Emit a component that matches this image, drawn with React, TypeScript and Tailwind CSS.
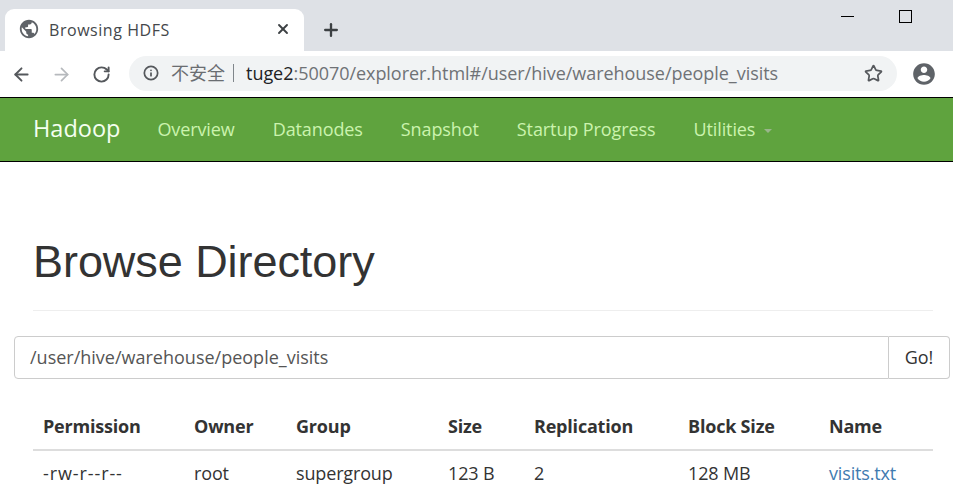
import React from 'react';
import { ArrowLeft, ArrowRight, RotateCw, X, Plus, Star, Info } from 'lucide-react';

const sans = "font-['Open_Sans','Noto_Sans_CJK_SC',sans-serif]";

const Globe = () => (
  <svg viewBox="0 0 24 24" width="22" height="22" fill="#5f6368" className="-ml-[2px]">
    <path d="M12 2C6.48 2 2 6.48 2 12s4.48 10 10 10 10-4.48 10-10S17.52 2 12 2zm-1 17.93C7.05 19.44 4 16.08 4 12c0-.62.08-1.21.21-1.79L9 15v1c0 1.1.9 2 2 2v1.93zm6.9-2.54c-.26-.81-1-1.39-1.9-1.39h-1v-3c0-.55-.45-1-1-1H8v-2h2c.55 0 1-.45 1-1V7h2c1.1 0 2-.9 2-2v-.41c2.93 1.19 5 4.06 5 7.41 0 2.08-.8 3.97-2.1 5.39z" />
  </svg>
);

const Account = () => (
  <svg viewBox="0 0 24 24" width="26" height="26" fill="#5f6368">
    <path d="M12 2C6.48 2 2 6.48 2 12s4.48 10 10 10 10-4.48 10-10S17.52 2 12 2zm0 3c1.66 0 3 1.34 3 3s-1.34 3-3 3-3-1.34-3-3 1.34-3 3-3zm0 14.2c-2.5 0-4.71-1.28-6-3.22.03-1.99 4-3.08 6-3.08s5.97 1.09 6 3.08c-1.29 1.94-3.5 3.22-6 3.22z" />
  </svg>
);

const TabStrip = () => (
  <div className="h-[51px] bg-[#dee1e6] flex items-end pl-[5px]">
    <div className="w-[299px] h-[42px] bg-white rounded-t-[9px] flex items-center pl-[15px] pr-[13px] pb-[2px]">
      <Globe />
      <span className="ml-[9px] mt-[2px] text-[16px] tracking-[0.55px] text-[#44474b]">Browsing HDFS</span>
      <X size={16} strokeWidth={2.8} className="ml-auto text-[#3c4043]" />
    </div>
    <div className="ml-[17px] mb-[11px]">
      <Plus size={20} strokeWidth={2.8} className="text-[#3c4043]" />
    </div>
    <div className="ml-auto self-start flex items-center mr-[41px] mt-[10px] gap-[45px]">
      <div className="w-[13px] h-px bg-black" />
      <div className="w-[13px] h-[13px] border border-black" />
    </div>
  </div>
);

const AddressBar = () => (
  <div className="h-[46px] bg-white flex items-center pl-[11px]">
    <ArrowLeft size={21} strokeWidth={2.2} className="text-[#55585c]" />
    <ArrowRight size={21} strokeWidth={2} className="ml-[19px] text-[#b6b9bd]" />
    <RotateCw size={19} strokeWidth={2.4} className="ml-[20px] text-[#55585c]" />
    <div className="ml-[18px] w-[768px] h-[35px] rounded-full bg-[#f1f3f4] flex items-center pl-[14px] pr-[14px] mt-[-2px]">
      <Info size={16} strokeWidth={2.6} className="text-[#55585c]" />
      <span className="ml-[12px] text-[18px] leading-none text-[#6a6d71]">不安全</span>
      <span className="ml-[8px] w-px h-[18px] bg-[#80868b]" />
      <span className="ml-[12px] text-[18px] tracking-[-0.04px] whitespace-nowrap text-[#6f7276]">
        <span className="text-[#202124]">tuge2</span>:50070/explorer.html#/user/hive/warehouse/people_visits
      </span>
      <Star size={19} strokeWidth={2.2} className="ml-auto text-[#55585c]" />
    </div>
    <div className="ml-[14px]">
      <Account />
    </div>
  </div>
);

const navItems = ['Overview', 'Datanodes', 'Snapshot', 'Startup Progress'];

const Navbar = () => (
  <nav className="h-[65px] bg-[#5fa33e] border-y border-black flex items-center pl-[33px] pb-[1px]">
    <a className="text-[23.5px] text-[#f4fff0] mr-[37px]">Hadoop</a>
    <div className="flex items-center gap-[38px] text-[18px] tracking-[-0.1px] text-[#cbf3ae]">
      {navItems.map((item) => (
        <a key={item}>{item}</a>
      ))}
      <a className="flex items-center">
        Utilities
        <span className="ml-[9px] mt-[3px] border-x-[4px] border-x-transparent border-t-[4px] border-t-[#9ab58c]" />
      </a>
    </div>
  </nav>
);

const rows = [['-rw-r--r--', 'root', 'supergroup', '123 B', '2', '128 MB', 'visits.txt']];
const headers = ['Permission', 'Owner', 'Group', 'Size', 'Replication', 'Block Size', 'Name'];
const widths = ['w-[151px]', 'w-[102px]', 'w-[152px]', 'w-[86px]', 'w-[154px]', 'w-[141px]', 'w-[114px]'];

const FileTable = () => (
  <table className="mt-[25px] ml-[33px] w-[900px] table-fixed text-[18px] tracking-[-0.15px] text-[#333]">
    <thead>
      <tr className="border-b-2 border-[#ddd]">
        {headers.map((h, i) => (
          <th key={h} className={`${widths[i]} h-[46px] px-[10px] text-left font-bold tracking-[-0.2px]`}>
            {h}
          </th>
        ))}
      </tr>
    </thead>
    <tbody>
      {rows.map((row) => (
        <tr key={row[0]}>
          {row.map((cell, i) => (
            <td key={i} className="h-[46px] px-[10px] whitespace-nowrap">
              {i === 6 ? (
                <a className="text-[#3f7bb0]">{cell}</a>
              ) : i === 0 ? (
                <span className="tracking-[0.9px]">{cell}</span>
              ) : (
                cell
              )}
            </td>
          ))}
        </tr>
      ))}
    </tbody>
  </table>
);

export default function App() {
  return (
    <div className={`w-[953px] h-[502px] overflow-hidden bg-white ${sans}`}>
      <TabStrip />
      <AddressBar />
      <Navbar />
      <div className="ml-[33px] mr-[20px] mt-[72px] pb-[26px] border-b border-[#eee]">
        <h1 className="font-['Liberation_Sans',sans-serif] text-[45px] tracking-[-0.06px] leading-[55px] h-[50px] text-[#333]">Browse Directory</h1>
      </div>
      <div className="ml-[14px] mt-[25px] w-[936px] h-[43px] flex text-[18px] text-[#555]">
        <div className="flex-1 border border-[#ccc] rounded-l-[4px] flex items-center pl-[15px]">/user/hive/warehouse/people_visits</div>
        <button className="w-[61px] border border-l-0 border-[#ccc] rounded-r-[4px] text-[#333]">Go!</button>
      </div>
      <FileTable />
    </div>
  );
}
